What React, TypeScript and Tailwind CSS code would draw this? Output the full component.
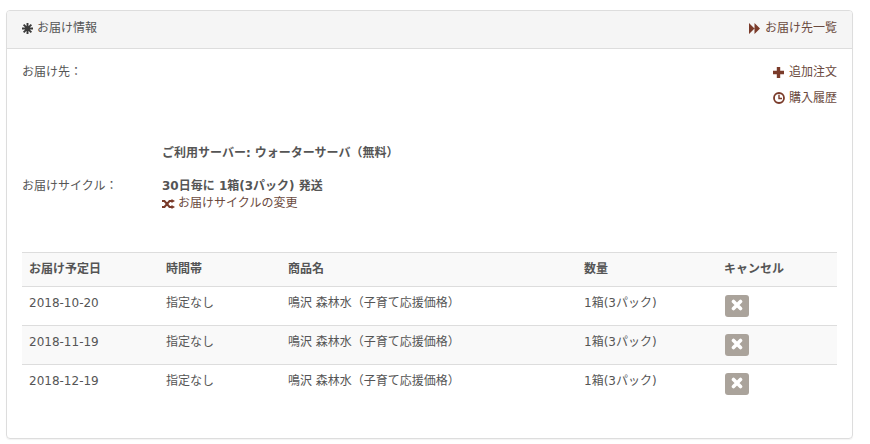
const font = "font-['DejaVu_Sans','Noto_Sans_CJK_JP',sans-serif]";

function AsteriskIcon() {
  return (
    <svg className="w-[11px] h-[11px]" viewBox="0 0 12 12" fill="none" stroke="#3a3a3a" strokeWidth="2.1">
      <path d="M6 0v12M0 6h12M1.8 1.8l8.4 8.4M10.2 1.8l-8.4 8.4" />
    </svg>
  );
}

function ForwardIcon() {
  return (
    <svg className="w-[11px] h-[11px]" viewBox="0 0 11 11" fill="#7a3b2a">
      <path d="M0 0l5.5 5.5L0 11zM5.5 0L11 5.5 5.5 11z" />
    </svg>
  );
}

function PlusIcon() {
  return (
    <svg className="w-[11px] h-[11px]" viewBox="0 0 11 11" fill="#7a3b2a">
      <path d="M3.8 0h3.4v3.8H11v3.4H7.2V11H3.8V7.2H0V3.8h3.8z" />
    </svg>
  );
}

function ClockIcon() {
  return (
    <svg className="w-3 h-3 mt-[-2px]" viewBox="0 0 12 12" fill="none" stroke="#7a3b2a">
      <circle cx="6" cy="6" r="5" strokeWidth="1.8" />
      <path d="M6 2.8v3.7h3" strokeWidth="1.4" />
    </svg>
  );
}

function RandomIcon() {
  return (
    <svg className="w-[13px] h-[10px]" viewBox="0 0 13 10" fill="none" stroke="#7a3b2a" strokeWidth="2">
      <path d="M0 2h2.5l5 6H10M0 8h2.5l5-6H10" />
      <path d="M9.5 0L13 2 9.5 4zM9.5 6L13 8l-3.5 2z" fill="#7a3b2a" stroke="none" />
    </svg>
  );
}

function CancelButton() {
  return (
    <button className="w-6 h-[22px] rounded-[3px] bg-[#aaa39b] flex items-center justify-center">
      <svg className="w-3 h-3 mt-[-2px]" viewBox="0 0 12 12" stroke="#fff" strokeWidth="3.6" strokeLinecap="round">
        <path d="M2.5 2.5l7 7M9.5 2.5l-7 7" />
      </svg>
    </button>
  );
}

const rows = ["2018-10-20", "2018-11-19", "2018-12-19"];

export default function App() {
  return (
    <div className={`${font} w-[870px] h-[444px] pt-2.5 pl-1.5 bg-white text-[12px] leading-[17px] text-[#555] overflow-hidden`}>
      <div className="w-[847px] h-[429px] rounded-[4px] border border-[#ddd] shadow-[0_1px_1px_rgba(0,0,0,0.05)]">
        <div className="h-[38px] pl-[15px] pr-[15px] flex items-center justify-between bg-[#f5f5f5] border-b border-[#ddd] rounded-t-[3px]">
          <div className="flex items-center gap-1 mt-[-2px]">
            <AsteriskIcon />
            <span>お届け情報</span>
          </div>
          <a className="flex items-center gap-[5px] mt-[-2px] text-[#6b4a3e]">
            <ForwardIcon />
            <span>お届け先一覧</span>
          </a>
        </div>

        <div className="px-[15px] pt-[15px]">
          <div className="flex h-[174px]">
            <div className="w-[140px] shrink-0 flex flex-col">
              <div>お届け先：</div>
              <div className="mt-[97px]">お届けサイクル：</div>
            </div>
            <div className="flex-1 flex flex-col pt-[81px] font-bold">
              <div>ご利用サーバー: ウォーターサーバ（無料）</div>
              <div className="mt-[16px]">30日毎に 1箱(3パック) 発送</div>
              <a className="flex items-center gap-[3px] font-normal text-[#6b4a3e]">
                <RandomIcon />
                <span>お届けサイクルの変更</span>
              </a>
            </div>
            <div className="flex flex-col items-end gap-[9px] text-[#6b4a3e]">
              <a className="flex items-center gap-[5px]">
                <PlusIcon />
                <span>追加注文</span>
              </a>
              <a className="flex items-center gap-[4px]">
                <ClockIcon />
                <span>購入履歴</span>
              </a>
            </div>
          </div>

          <table className="w-[815px] table-fixed border-collapse mt-[14px]">
            <thead>
              <tr className="h-[34px] bg-[#f9f9f9] border-y border-[#ddd] text-left">
                <th className="w-[137px] pl-[7px] font-bold">お届け予定日</th>
                <th className="w-[122px] pl-[7px] font-bold">時間帯</th>
                <th className="w-[296px] pl-[7px] font-bold">商品名</th>
                <th className="w-[140px] pl-[7px] font-bold">数量</th>
                <th className="pl-[7px] font-bold">キャンセル</th>
              </tr>
            </thead>
            <tbody>
              {rows.map((d, i) => (
                <tr key={d} className={`h-[39px] align-top ${i < 2 ? "border-b border-[#ddd]" : ""} ${i === 1 ? "bg-[#f9f9f9]" : ""}`}>
                  <td className="pl-[7px] pt-[8px]">{d}</td>
                  <td className="pl-[7px] pt-[8px]">指定なし</td>
                  <td className="pl-[7px] pt-[8px]">鳴沢 森林水（子育て応援価格）</td>
                  <td className="pl-[7px] pt-[8px]">1箱(3パック)</td>
                  <td className="pl-[8px] pt-[8px]"><CancelButton /></td>
                </tr>
              ))}
            </tbody>
          </table>
        </div>
      </div>
    </div>
  );
}
